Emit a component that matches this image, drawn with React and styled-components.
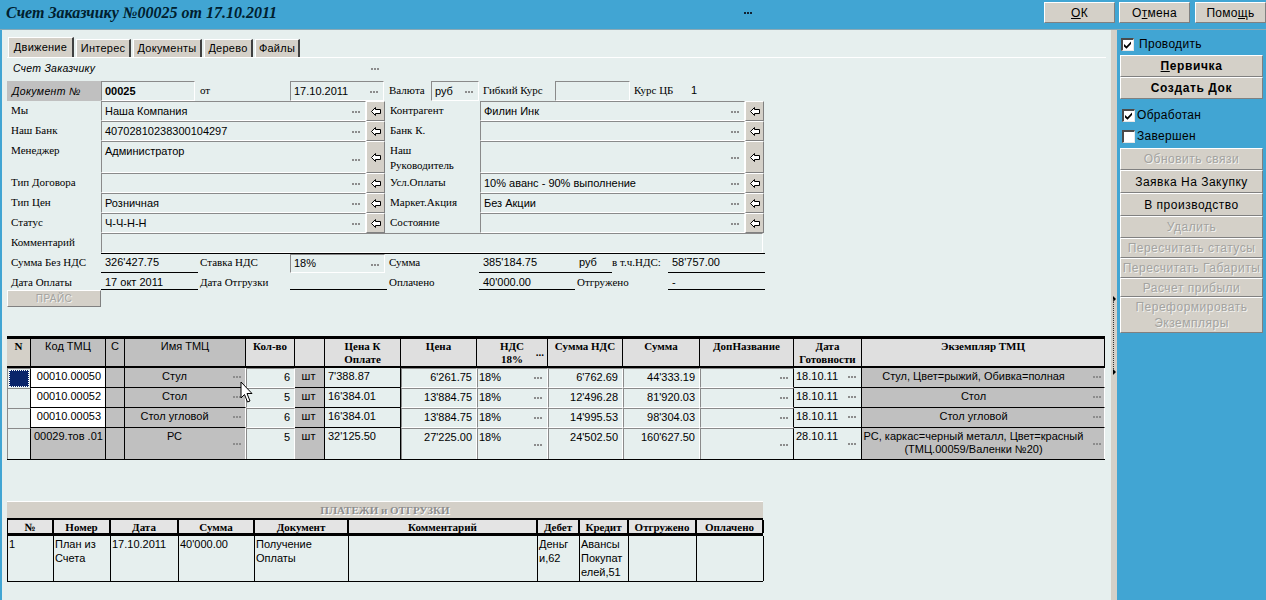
import React from 'react';
import styled, { createGlobalStyle, css } from 'styled-components';

const PANEL = '#e6efee';
const FACE = '#d4d0c8';
const GRAY = '#c0c0c0';
const BLUE = '#41a5d3';

const GlobalStyle = createGlobalStyle`
  html, body { margin: 0; padding: 0; height: 100%; overflow: hidden; background: ${BLUE}; }
  body { font: 11px/13px "Liberation Sans", Arial, sans-serif; color: #000; }
`;

const bevel = css`
  border: 1px solid;
  border-color: #fff #808080 #808080 #fff;
  box-sizing: border-box;
`;

const sunken = css`
  box-sizing: border-box;
  border-style: solid;
  border-color: #8a8a8a #fff #fff #8a8a8a;
  border-width: 1px;
`;

const Page = styled.div`
  width: 1266px;
  height: 600px;
  display: flex;
  flex-direction: column;
  background: ${BLUE};
  overflow: hidden;
`;

const TitleBar = styled.header`
  height: 29px;
  flex: none;
  display: flex;
  align-items: flex-start;
  border-bottom: 1px solid #8ba9b5;
`;

const Title = styled.h1`
  margin: 3px 0 0 6px;
  width: 738px;
  font: italic bold 16px/20px "Liberation Serif", "Times New Roman", serif;
  color: #00202e;
  white-space: nowrap;
`;

const TitleDots = styled.span`
  margin-top: 12px;
  width: 8px;
  height: 2px;
  background: repeating-linear-gradient(90deg, #123 0 2px, transparent 2px 3px);
`;

const TopButtons = styled.div`
  margin: 2px 0 0 auto;
  display: flex;
  gap: 4px;
`;

const TopButton = styled.button`
  ${bevel}
  width: 71px;
  height: 21px;
  padding: 0;
  background: ${FACE};
  font: 12px/14px "Liberation Sans", Arial, sans-serif;
  letter-spacing: 0.3px;
  color: #000;
  u { text-underline-offset: 1px; }
  &:last-child { margin-left: 1px; }
`;

const Body = styled.div`
  flex: 1;
  display: flex;
  min-height: 0;
`;

const Main = styled.main`
  width: 1109px;
  margin-left: 2px;
  padding: 7px 0 0 5px;
  box-sizing: border-box;
  background: ${PANEL};
  flex: none;
`;

const Splitter = styled.div`
  position: relative;
  width: 6px;
  flex: none;
  background: ${FACE};
`;

const SplitDots = styled.span`
  position: absolute;
  left: 2px;
  top: 269px;
  height: 74px;
  border-left: 1px dotted #333;
`;

const SplitArrow = styled.span`
  position: absolute;
  left: 2px;
  top: ${p => p.$top}px;
  border-style: solid;
  border-width: 3px 0 3px 3px;
  border-color: transparent transparent transparent #000;
`;

const Side = styled.aside`
  width: 148px;
  flex: none;
  padding: 7px 2px 0 3px;
  box-sizing: border-box;
  display: flex;
  flex-direction: column;
`;

const CheckRow = styled.label`
  display: flex;
  align-items: center;
  height: ${p => p.$h || 15}px;
  margin: ${p => p.$margin || 0};
  gap: ${p => p.$gap || 4}px;
  padding-left: ${p => p.$pad || 1}px;
  font-size: 12px;
  letter-spacing: 0.3px;
`;

const CheckBox = styled.span`
  width: 13px;
  height: 13px;
  flex: none;
  box-sizing: border-box;
  border-style: solid;
  border-width: 2px 1px 1px 2px;
  border-color: #4a4a4a #e8e8e8 #e8e8e8 #4a4a4a;
  background: #fff;
  display: flex;
  align-items: center;
  justify-content: center;
`;

const SideButton = styled.button`
  ${bevel}
  width: 143px;
  height: ${p => p.$h}px;
  padding: 0;
  background: ${FACE};
  font: ${p => (p.$bold ? 'bold' : 'normal')} 12px/16px "Liberation Sans", Arial, sans-serif;
  letter-spacing: ${p => (p.$bold ? '0.6px' : '0.5px')};
  color: ${p => (p.disabled ? '#a3a3a0' : '#000')};
  text-shadow: ${p => (p.disabled ? '1px 1px 0 #f2f2f0' : 'none')};
  white-space: pre-line;
`;

const Tabs = styled.nav`
  display: flex;
  height: 20px;
  width: 1098px;
  border-bottom: 1px solid #fff;
  align-items: flex-end;
  padding-left: 1px;
  gap: 2px;
`;

const Tab = styled.div`
  box-sizing: border-box;
  width: ${p => p.$w}px;
  height: ${p => (p.$active ? 20 : 18)}px;
  background: ${FACE};
  border: solid;
  border-width: 1px 2px 0 1px;
  border-color: #fff #404040 #fff #fff;
  text-align: center;
  line-height: ${p => (p.$active ? 18 : 17)}px;
  letter-spacing: 0.25px;
`;

const Caption = styled.div`
  height: 23px;
  width: 372px;
  display: flex;
  align-items: center;
  padding: 0 0 3px 6px;
  box-sizing: border-box;
  font-style: italic;
  font-size: 10.5px;
  letter-spacing: 0.25px;
  justify-content: space-between;
`;

const Dots = styled.span`
  flex: none;
  margin-left: auto;
  margin-right: ${p => p.$right ?? 5}px;
  margin-top: 2px;
  width: 8px;
  height: 2px;
  background: repeating-linear-gradient(90deg, #8c8c8c 0 2px, transparent 2px 3px);
`;

const Form = styled.section`
  display: flex;
  flex-direction: column;
  width: 760px;
`;

const Row = styled.div`
  display: flex;
  height: ${p => p.$h || 20}px;
`;

const SerifLabel = styled.div`
  flex: none;
  box-sizing: border-box;
  width: ${p => p.$w}px;
  padding: ${p => p.$pad || '2px 0 0 4px'};
  font: 11px/15px "Liberation Serif", "Times New Roman", serif;
  white-space: pre-line;
`;

const DocLabel = styled.div`
  flex: none;
  width: 94px;
  box-sizing: border-box;
  background: ${GRAY};
  padding: 3px 0 0 5px;
  font: italic 10.5px/14px "Liberation Sans", Arial, sans-serif;
  letter-spacing: 0.35px;
`;

const Field = styled.div`
  ${sunken}
  flex: none;
  width: ${p => p.$w}px;
  display: flex;
  align-items: ${p => (p.$top ? 'flex-start' : 'center')};
  padding: ${p => (p.$top ? '3px 0 0 3px' : '0 0 0 3px')};
  white-space: nowrap;
  font-weight: ${p => (p.$bold ? 'bold' : 'normal')};
  ${Dots} { align-self: center; }
`;

const ArrowButton = styled.button`
  ${bevel}
  flex: none;
  width: 19px;
  padding: 0;
  background: ${FACE};
  display: flex;
  align-items: center;
  justify-content: center;
`;

const ReadOnly = styled.div`
  flex: none;
  box-sizing: border-box;
  width: ${p => p.$w}px;
  padding: ${p => p.$pt ?? 2}px 0 0 4px;
  border-bottom: ${p => (p.$line ? '1px solid #000' : '0 none')};
`;

const Totals = styled.div`
  display: flex;
  border-top: 1px solid #000;
  flex: none;
  width: 664px;
`;

const Plain = styled.div`
  flex: none;
  width: ${p => p.$w}px;
  display: flex;
`;

const PriceButton = styled.button`
  ${bevel}
  width: 94px;
  height: 17px;
  padding: 0;
  background: ${FACE};
  font: 10px/13px "Liberation Sans", Arial, sans-serif;
  letter-spacing: 0.4px;
  color: #a3a3a0;
  text-shadow: 1px 1px 0 #f2f2f0;
`;

const GridWrap = styled.section`
  position: relative;
  margin-top: 29px;
  width: 1098px;
  border-top: 3px solid #000;
  border-bottom: 1px solid #000;
`;

const gridCols = '24px 75px 19px 121px 49px 30px 76px 76px 71px 75px 77px 94px 68px 243px';
const payCols = '46px 57px 68px 76px 94px 189px 42px 49px 68px 67px';

const HeadRow = styled.div`
  display: grid;
  grid-template-columns: ${p => p.$cols};
  height: 26px;
  border-bottom: 3px solid #000;
`;

const HeadCell = styled.div`
  box-sizing: border-box;
  position: relative;
  padding-top: 1px;
  text-align: center;
  white-space: pre-line;
  background: ${p => (p.$tone === 'gray' ? GRAY : p.$tone === 'face' ? FACE : '#dfdfdf')};
  border-right: 1px solid #000;
  font: ${p => (p.$sans ? 'normal 11px/13px "Liberation Sans", Arial, sans-serif' : 'bold 11px/13px "Liberation Serif", "Times New Roman", serif')};
`;

const HeadDots = styled.span`
  position: absolute;
  right: 3px;
  top: 11px;
  font: bold 10px/6px "Liberation Sans", Arial, sans-serif;
`;

const DataRow = styled.div`
  display: grid;
  grid-template-columns: ${p => p.$cols};
  height: ${p => p.$h}px;
`;

const Cell = styled.div`
  box-sizing: border-box;
  display: flex;
  min-width: 0;
  white-space: nowrap;
  padding: 2px ${p => (p.$align === 'right' ? 4 : 2)}px 0 ${p => p.$pl ?? (p.$align === 'center' ? 0 : 2)}px;
  background: ${p => (p.$tone === 'white' ? '#fff' : p.$tone === 'gray' ? GRAY : PANEL)};
  border-right: ${p => (p.$line ? '1px solid #000' : '1px solid #fff')};
  border-left: ${p => (p.$edge ? '1px solid #8a8a8a' : '0 none')};
  border-top: ${p => (p.$edge ? '1px solid #8a8a8a' : '0 none')};
  border-bottom: ${p => (p.$last ? '0 none' : p.$edge ? '1px solid #fff' : '1px solid #000')};
  justify-content: ${p => (p.$align === 'right' ? 'flex-end' : 'flex-start')};
  position: relative;
`;

const CellText = styled.span`
  flex: 1;
  text-align: ${p => p.$align || 'left'};
  white-space: pre-line;
  padding-right: ${p => p.$reserve || 0}px;
`;

const SelectedMark = styled.div`
  width: 100%;
  height: 100%;
  box-sizing: border-box;
  background: #0a246a;
  outline: 1px dotted #fff;
  outline-offset: -1px;
`;

const MarkCell = styled.div`
  box-sizing: border-box;
  padding: 1px;
  background: ${PANEL};
  border-right: 1px solid #000;
  border-left: 1px solid #8a8a8a;
  border-top: 1px solid #8a8a8a;
`;

const CellDots = styled.span`
  position: absolute;
  right: ${p => p.$right ?? 4}px;
  top: ${p => p.$top ?? 8}px;
  width: 8px;
  height: 2px;
  background: repeating-linear-gradient(90deg, #8c8c8c 0 2px, transparent 2px 3px);
`;

const Cursor = styled.svg`
  position: absolute;
  left: 233px;
  top: 42px;
  z-index: 2;
`;

const Payments = styled.section`
  margin-top: 41px;
  width: 756px;
`;

const PayTitle = styled.div`
  height: 17px;
  background: ${FACE};
  border-top: 1px solid #fff;
  box-sizing: border-box;
  text-align: center;
  font: bold 11px/17px "Liberation Serif", "Times New Roman", serif;
  color: #8d8d8d;
  text-shadow: 1px 1px 0 #fff;
`;

const PayHead = styled.div`
  display: grid;
  grid-template-columns: ${payCols};
  height: 18px;
  box-sizing: border-box;
  border: solid #000;
  border-width: 2px 0 3px 1px;
`;

const PayHeadCell = styled.div`
  background: #e4e4e4;
  border-right: 2px solid #000;
  text-align: center;
  padding-top: 1px;
  font: bold 11px/12px "Liberation Serif", "Times New Roman", serif;
  box-sizing: border-box;
`;

const PayRow = styled.div`
  display: grid;
  grid-template-columns: ${payCols};
  height: 46px;
  box-sizing: border-box;
  border-left: 1px solid #000;
  border-bottom: 1px solid #000;
`;

const PayCell = styled.div`
  border-right: 1px solid #000;
  padding: 1px 0 0 1px;
  line-height: 14px;
  white-space: pre-line;
`;

const Check = () => (
  <svg width="8" height="8" viewBox="0 0 8 8"><path d="M0 3 L2.5 5.2 L7 .5 V3 L2.5 7.8 L0 5.5 Z" fill="#000" /></svg>
);

const LeftArrow = () => (
  <svg width="10" height="9" viewBox="0 0 10 9">
    <path d="M4.5 .5 L.5 4.5 L4.5 8.5 V6.5 H9.5 V2.5 H4.5 Z" fill="#fff" stroke="#000" strokeWidth="1" />
  </svg>
);

const LinkedField = ({ top, children }) => (
  <>
    <Field $w={265} $top={top}>{children}<Dots /></Field>
    <ArrowButton><LeftArrow /></ArrowButton>
  </>
);

const formRows = [
  { h: 20, l: 'Мы', lv: 'Наша Компания', r: 'Контрагент', rv: 'Филин Инк' },
  { h: 20, l: 'Наш Банк', lv: '40702810238300104297', r: 'Банк К.', rv: '' },
  { h: 32, l: 'Менеджер', lv: 'Администратор', r: 'Наш\nРуководитель', rv: '', top: true },
  { h: 20, l: 'Тип Договора', lv: '', r: 'Усл.Оплаты', rv: '10% аванс - 90% выполнение' },
  { h: 20, l: 'Тип Цен', lv: 'Розничная', r: 'Маркет.Акция', rv: 'Без Акции' },
  { h: 20, l: 'Статус', lv: 'Ч-Ч-Н-Н', r: 'Состояние', rv: '' },
];

const gridHead = [
  { t: 'N', tone: 'face' },
  { t: 'Код ТМЦ', tone: 'gray', sans: true },
  { t: 'С', tone: 'gray', sans: true },
  { t: 'Имя ТМЦ', tone: 'gray', sans: true },
  { t: 'Кол-во' },
  { t: '' },
  { t: 'Цена К\nОплате' },
  { t: 'Цена' },
  { t: 'НДС\n18%', dots: true },
  { t: 'Сумма НДС' },
  { t: 'Сумма' },
  { t: 'ДопНазвание' },
  { t: 'Дата\nГотовности' },
  { t: 'Экземпляр ТМЦ' },
];

const gridRows = [
  { h: 20, sel: true, code: '00010.00050', name: 'Стул', qty: 6, pay: "7'388.87", price: "6'261.75", vat: "6'762.69", sum: "44'333.19", date: '18.10.11', item: 'Стул, Цвет=рыжий, Обивка=полная' },
  { h: 20, code: '00010.00052', name: 'Стол', qty: 5, pay: "16'384.01", price: "13'884.75", vat: "12'496.28", sum: "81'920.03", date: '18.10.11', item: 'Стол' },
  { h: 20, code: '00010.00053', name: 'Стол угловой', qty: 6, pay: "16'384.01", price: "13'884.75", vat: "14'995.53", sum: "98'304.03", date: '18.10.11', item: 'Стол угловой' },
  { h: 31, tall: true, code: '00029.тов .01', name: 'РС', qty: 5, pay: "32'125.50", price: "27'225.00", vat: "24'502.50", sum: "160'627.50", date: '28.10.11', item: 'РС, каркас=черный металл, Цвет=красный\n(ТМЦ.00059/Валенки №20)' },
];

const payHead = ['№', 'Номер', 'Дата', 'Сумма', 'Документ', 'Комментарий', 'Дебет', 'Кредит', 'Отгружено', 'Оплачено'];
const payRow = ['1', 'План из\nСчета', '17.10.2011', "40'000.00", 'Получение\nОплаты', '', 'Деньг\nи,62', 'Авансы\nПокупат\nелей,51', '', ''];

const sideButtons = [
  { t: 'Обновить связи', h: 22, off: true },
  { t: 'Заявка На Закупку', h: 23 },
  { t: 'В производство', h: 23 },
  { t: 'Удалить', h: 22, off: true },
  { t: 'Пересчитать статусы', h: 20, off: true },
  { t: 'Пересчитать Габариты', h: 20, off: true },
  { t: 'Расчет прибыли', h: 19, off: true },
  { t: 'Переформировать\nЭкземпляры', h: 36, off: true },
];

export default function App() {
  return (
    <Page>
      <GlobalStyle />
      <TitleBar>
        <Title>Счет Заказчику №00025 от 17.10.2011</Title>
        <TitleDots />
        <TopButtons>
          <TopButton><u>О</u>К</TopButton>
          <TopButton>О<u>т</u>мена</TopButton>
          <TopButton>Помо<u>щ</u>ь</TopButton>
        </TopButtons>
      </TitleBar>
      <Body>
        <Main>
          <Tabs>
            <Tab $w={66} $active>Движение</Tab>
            <Tab $w={55}>Интерес</Tab>
            <Tab $w={69}>Документы</Tab>
            <Tab $w={49}>Дерево</Tab>
            <Tab $w={45}>Файлы</Tab>
          </Tabs>
          <Caption>Счет Заказчику<Dots $right={0} /></Caption>
          <Form>
            <Row>
              <DocLabel>Документ №</DocLabel>
              <Field $w={94} $bold>00025</Field>
              <SerifLabel $w={95} $pad="2px 0 0 5px">от</SerifLabel>
              <Field $w={94}>17.10.2011<Dots /></Field>
              <SerifLabel $w={47} $pad="2px 0 0 5px">Валюта</SerifLabel>
              <Field $w={48}>руб<Dots /></Field>
              <SerifLabel $w={76} $pad="2px 0 0 4px">Гибкий Курс</SerifLabel>
              <Field $w={75} />
              <SerifLabel $w={57}>Курс ЦБ</SerifLabel>
              <ReadOnly $w={20} $pt={3}>1</ReadOnly>
            </Row>
            {formRows.map(r => (
              <Row key={r.l} $h={r.h}>
                <SerifLabel $w={94}>{r.l}</SerifLabel>
                <LinkedField top={r.top}>{r.lv}</LinkedField>
                <SerifLabel $w={95} $pad="2px 0 0 5px">{r.r}</SerifLabel>
                <LinkedField>{r.rv}</LinkedField>
              </Row>
            ))}
            <Row>
              <SerifLabel $w={94}>Комментарий</SerifLabel>
              <Field $w={662} />
            </Row>
            <Row>
              <SerifLabel $w={94}>Сумма Без НДС</SerifLabel>
              <Totals>
                <ReadOnly $w={97} $line>326'427.75</ReadOnly>
                <SerifLabel $w={92} $pad="1px 0 0 2px">Ставка НДС</SerifLabel>
                <Field $w={95}>18%<Dots /></Field>
                <SerifLabel $w={94} $pad="1px 0 0 4px">Сумма</SerifLabel>
                <ReadOnly $w={96} $line>385'184.75</ReadOnly>
                <ReadOnly $w={37} $line>руб</ReadOnly>
                <SerifLabel $w={56} $pad="1px 0 0 0">в т.ч.НДС:</SerifLabel>
                <ReadOnly $w={97} $line>58'757.00</ReadOnly>
              </Totals>
            </Row>
            <Row $h={17}>
              <SerifLabel $w={94}>Дата Оплаты</SerifLabel>
              <Plain $w={664}>
                <ReadOnly $w={97} $line $pt={3}>17 окт 2011</ReadOnly>
                <SerifLabel $w={92} $pad="2px 0 0 2px">Дата Отгрузки</SerifLabel>
                <ReadOnly $w={97} $line $pt={3} />
                <SerifLabel $w={92} $pad="2px 0 0 2px">Оплачено</SerifLabel>
                <ReadOnly $w={96} $line $pt={3}>40'000.00</ReadOnly>
                <SerifLabel $w={93} $pad="2px 0 0 2px">Отгружено</SerifLabel>
                <ReadOnly $w={97} $line $pt={3}>-</ReadOnly>
              </Plain>
            </Row>
            <Row $h={17}>
              <PriceButton disabled>ПРАЙС</PriceButton>
            </Row>
          </Form>

          <GridWrap>
            <HeadRow $cols={gridCols}>
              {gridHead.map((h, i) => (
                <HeadCell key={i} $tone={h.tone} $sans={h.sans}>
                  {h.t}
                  {h.dots && <HeadDots>...</HeadDots>}
                </HeadCell>
              ))}
            </HeadRow>
            {gridRows.map(r => {
              const dotsTop = r.tall ? 15 : 8;
              return (
                <DataRow key={r.code} $cols={gridCols} $h={r.h}>
                  <MarkCell>{r.sel && <SelectedMark />}</MarkCell>
                  <Cell $last={r.tall} $tone={r.tall ? 'gray' : 'white'} $line $align={r.tall ? 'left' : 'right'} $pl={3}>{r.code}</Cell>
                  <Cell $last={r.tall} $tone="gray" $line />
                  <Cell $last={r.tall} $tone="gray" $align="center">
                    <CellText $align="center" $reserve={19}>{r.name}</CellText>
                    <CellDots $top={dotsTop} />
                  </Cell>
                  <Cell $last={r.tall} $align="right" $edge>{r.qty}</Cell>
                  <Cell $last={r.tall} $tone="gray" $align="center" $line><CellText $align="center">шт</CellText></Cell>
                  <Cell $last={r.tall} $line $pl={3}>{r.pay}</Cell>
                  <Cell $last={r.tall} $align="right" $edge>{r.price}</Cell>
                  <Cell $last={r.tall} $edge $pl={1}>18%<CellDots $right={5} $top={dotsTop} /></Cell>
                  <Cell $last={r.tall} $align="right" $edge>{r.vat}</Cell>
                  <Cell $last={r.tall} $align="right" $edge>{r.sum}</Cell>
                  <Cell $last={r.tall} $edge $line><CellDots $right={5} $top={dotsTop} /></Cell>
                  <Cell $last={r.tall} $line>{r.date}<CellDots $right={5} $top={dotsTop} /></Cell>
                  <Cell $last={r.tall} $tone="gray" $align="center">
                    <CellText $align="center" $reserve={17}>{r.item}</CellText>
                    <CellDots $right={3} $top={dotsTop} />
                  </Cell>
                </DataRow>
              );
            })}
            <Cursor width="13" height="23" viewBox="0 0 13 23">
              <path d="M1 1 V17 L4.5 13.5 L7.5 21 L10 20 L7 12.5 H12 Z" fill="#fff" stroke="#000" strokeWidth="1" />
            </Cursor>
          </GridWrap>

          <Payments>
            <PayTitle>ПЛАТЕЖИ и ОТГРУЗКИ</PayTitle>
            <PayHead>
              {payHead.map(t => <PayHeadCell key={t}>{t}</PayHeadCell>)}
            </PayHead>
            <PayRow>
              {payRow.map((t, i) => <PayCell key={i}>{t}</PayCell>)}
            </PayRow>
          </Payments>
        </Main>

        <Splitter>
          <SplitArrow $top={266} />
          <SplitDots />
          <SplitArrow $top={339} />
        </Splitter>

        <Side>
          <CheckRow $margin="0 0 3px" $gap={5}><CheckBox><Check /></CheckBox>Проводить</CheckRow>
          <SideButton $h={22} $bold><u>П</u>ервичка</SideButton>
          <SideButton $h={22} $bold>Создать Док</SideButton>
          <CheckRow $margin="8px 0 0" $h={16} $pad={2} $gap={2}><CheckBox><Check /></CheckBox>Обработан</CheckRow>
          <CheckRow $margin="5px 0 4px" $h={16} $pad={2} $gap={2}><CheckBox />Завершен</CheckRow>
          {sideButtons.map(b => (
            <SideButton key={b.t} $h={b.h} disabled={b.off}>{b.t}</SideButton>
          ))}
        </Side>
      </Body>
    </Page>
  );
}
